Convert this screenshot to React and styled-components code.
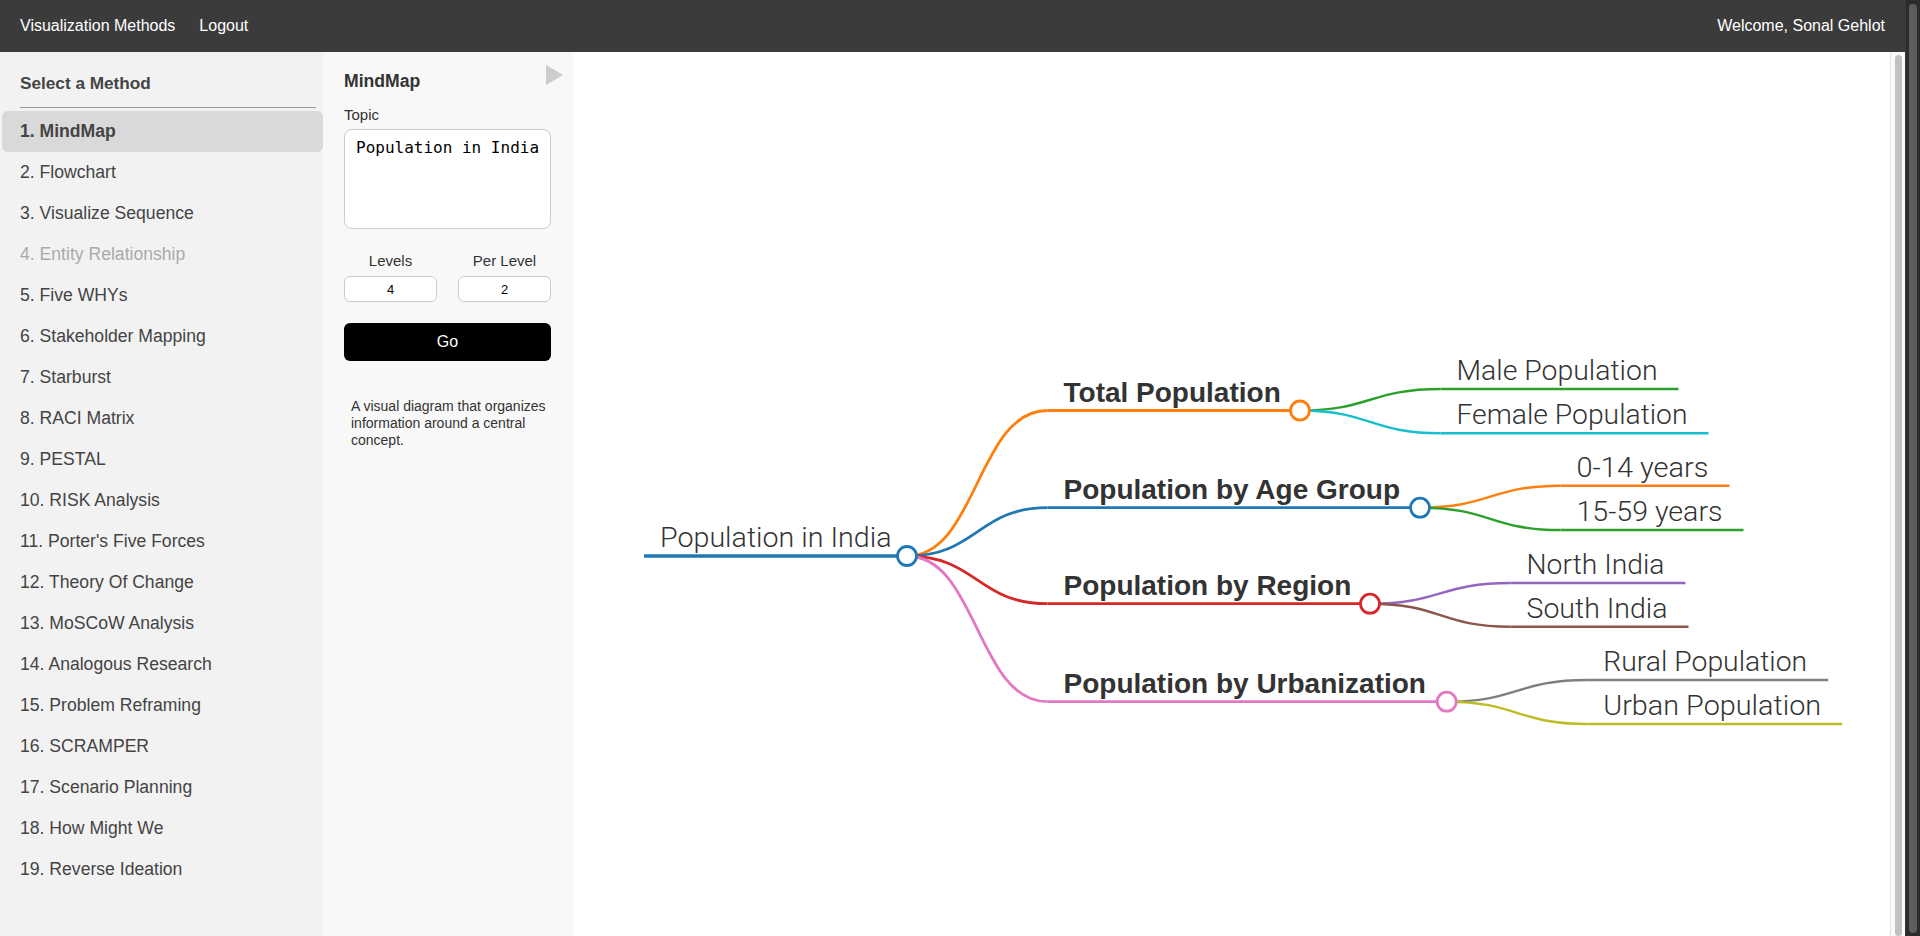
import React from "react";
import styled, { createGlobalStyle } from "styled-components";

const GlobalStyle = createGlobalStyle`
  body {
    margin: 0;
    font-family: "Liberation Sans", Arial, sans-serif;
    color: #333;
    overflow: hidden;
  }
`;

const Page = styled.div`
  height: 100vh;
  display: flex;
`;

const Column = styled.div`
  flex: 1;
  min-width: 0;
  display: flex;
  flex-direction: column;
`;

// stand-ins for the browser scrollbars seen in the screenshot
const Rail = styled.div`
  width: 15px;
  flex-shrink: 0;
  box-sizing: border-box;
  display: flex;
  padding: ${(p) => (p.$dark ? "4px 3px 3px 3px" : "3px 3px 0 4px")};
  background: ${(p) => (p.$dark ? "#2c2c2c" : "#fafafa")};
  border-left: 1px solid ${(p) => (p.$dark ? "#363636" : "#e4e4e4")};
`;

const Thumb = styled.div`
  flex: 1;
  border-radius: 5px;
  background: ${(p) => (p.$dark ? "#5d5d5d" : "#c1c1c1")};
`;

const TopBar = styled.nav`
  height: 52px;
  flex-shrink: 0;
  display: flex;
  align-items: center;
  padding: 0 8px;
  background: #3b3b3b;
  color: #fff;
  font-size: 16px;
`;

const NavLink = styled.a`
  padding: 0 12px;
  color: #fff;
  text-decoration: none;
  cursor: pointer;
  &:last-child {
    margin-left: auto;
  }
`;

const Body = styled.div`
  flex: 1;
  display: flex;
  min-height: 0;
`;

const Sidebar = styled.aside`
  width: 323px;
  flex-shrink: 0;
  background: #f2f2f2;
  overflow: hidden;
`;

const SidebarTitle = styled.h3`
  margin: 0 7px 0 20px;
  padding: 21px 0 14px;
  font-size: 17.2px;
  line-height: 20px;
  font-weight: bold;
  color: #444;
  border-bottom: 1px solid #9a9a9a;
`;

const MethodList = styled.ul`
  list-style: none;
  margin: 3px 0 0 2px;
  padding: 0;
`;

const MethodItem = styled.li`
  height: 41px;
  display: flex;
  align-items: center;
  padding-left: 18px;
  border-radius: 6px;
  font-size: 17.6px;
  cursor: pointer;
  color: ${(p) => (p.$disabled ? "#aaa" : "#444")};
  font-weight: ${(p) => (p.$active ? "bold" : "normal")};
  background: ${(p) => (p.$active ? "#d9d9d9" : "transparent")};
`;

const Panel = styled.section`
  width: 250px;
  flex-shrink: 0;
  box-sizing: border-box;
  padding: 19px 22px 0 21px;
  background: #f8f8f8;
`;

const PanelHeader = styled.div`
  display: flex;
  justify-content: space-between;
  align-items: flex-start;
  margin-right: -12px;
`;

const PanelTitle = styled.div`
  font-size: 17.6px;
  line-height: 20px;
  font-weight: bold;
  color: #333;
`;

const Toggle = styled.div`
  width: 0;
  height: 0;
  margin-top: -6px;
  border-top: 10px solid transparent;
  border-bottom: 10px solid transparent;
  border-left: 17px solid #ccc;
  cursor: pointer;
`;

const FieldLabel = styled.label`
  display: block;
  font-size: 15px;
  line-height: 18px;
  color: #333;
  margin-top: ${(p) => p.$top || 0}px;
  text-align: ${(p) => (p.$center ? "center" : "left")};
`;

const TopicBox = styled.textarea`
  display: block;
  width: 100%;
  height: 100px;
  margin-top: 5px;
  box-sizing: border-box;
  padding: 8px 4px 8px 11px;
  border: 1px solid #ccc;
  border-radius: 8px;
  background: #fff;
  font-family: "DejaVu Sans Mono", "Liberation Mono", monospace;
  font-size: 16px;
  color: #000;
  resize: none;
  outline: none;
  overflow: hidden;
`;

const NumberRow = styled.div`
  display: grid;
  grid-template-columns: 1fr 1fr;
  column-gap: 21px;
  margin-top: 23px;
`;

const NumberInput = styled.input`
  display: block;
  width: 100%;
  height: 26px;
  margin-top: 6px;
  box-sizing: border-box;
  border: 1px solid #ccc;
  border-radius: 6px;
  background: #fff;
  text-align: center;
  font-family: "Liberation Sans", Arial, sans-serif;
  font-size: 13px;
  color: #000;
  outline: none;
`;

const GoButton = styled.button`
  display: block;
  width: 100%;
  height: 38px;
  margin-top: 21px;
  border: none;
  border-radius: 6px;
  background: #000;
  color: #fff;
  font-family: "Liberation Sans", Arial, sans-serif;
  font-size: 16px;
  cursor: pointer;
`;

const Description = styled.p`
  margin: 37px 0 0 7px;
  font-size: 14px;
  line-height: 17px;
  color: #333;
`;

const Main = styled.main`
  flex: 1;
  min-width: 0;
  display: flex;
  background: #fff;
`;

const MapArea = styled.div`
  flex: 1;
  overflow: hidden;
`;

const Canvas = styled.svg`
  display: block;
`;

const Link = styled.path`
  fill: none;
  stroke: ${(p) => p.$color};
  stroke-width: ${(p) => p.$width};
`;

const Stem = styled.line`
  stroke: ${(p) => p.$color};
  stroke-width: ${(p) => p.$width};
`;

const Knob = styled.circle`
  fill: #fff;
  stroke: ${(p) => p.$color};
  stroke-width: 2.8;
`;

const Label = styled.text`
  font-size: 28px;
  fill: #333;
  font-family: ${(p) =>
    p.$bold ? `"Liberation Sans", Arial, sans-serif` : `Roboto, "Liberation Sans", sans-serif`};
  font-weight: ${(p) => (p.$bold ? 700 : 300)};
`;

const METHODS = [
  "MindMap",
  "Flowchart",
  "Visualize Sequence",
  "Entity Relationship",
  "Five WHYs",
  "Stakeholder Mapping",
  "Starburst",
  "RACI Matrix",
  "PESTAL",
  "RISK Analysis",
  "Porter's Five Forces",
  "Theory Of Change",
  "MoSCoW Analysis",
  "Analogous Research",
  "Problem Reframing",
  "SCRAMPER",
  "Scenario Planning",
  "How Might We",
  "Reverse Ideation",
];

// positions measured off the rendered map (page coordinates)
const TREE = {
  text: "Population in India",
  color: "#1f77b4",
  y: 556,
  x0: 644,
  tx: 660,
  w: 231.5,
  cx: 907,
  children: [
    {
      text: "Total Population",
      color: "#ff7f0e",
      y: 410.5,
      w: 217.5,
      cx: 1300,
      children: [
        { text: "Male Population", color: "#2ca02c", y: 389, w: 201 },
        { text: "Female Population", color: "#17becf", y: 433.3, w: 231 },
      ],
    },
    {
      text: "Population by Age Group",
      color: "#1f77b4",
      y: 507.7,
      w: 338,
      cx: 1420,
      children: [
        { text: "0-14 years", color: "#ff7f0e", y: 485.7, w: 132 },
        { text: "15-59 years", color: "#2ca02c", y: 530, w: 146 },
      ],
    },
    {
      text: "Population by Region",
      color: "#d62728",
      y: 603.7,
      w: 288,
      cx: 1370,
      children: [
        { text: "North India", color: "#9467bd", y: 583, w: 138 },
        { text: "South India", color: "#8c564b", y: 626.7, w: 141 },
      ],
    },
    {
      text: "Population by Urbanization",
      color: "#e377c2",
      y: 701.7,
      w: 363,
      cx: 1446.7,
      children: [
        { text: "Rural Population", color: "#7f7f7f", y: 680, w: 204 },
        { text: "Urban Population", color: "#bcbd22", y: 724, w: 218 },
      ],
    },
  ],
};

const WIDTHS = [3.6, 2.8, 2.4];

const flatten = (node, depth = 0, parent = null, out = []) => {
  const x0 = parent ? parent.cx + 140.5 : node.x0;
  const tx = parent ? x0 + 16 : node.tx;
  const end = node.children ? node.cx : tx + node.w + 21;
  const item = { ...node, depth, x0, tx, end, parent };
  out.push(item);
  (node.children || []).forEach((c) => flatten(c, depth + 1, item, out));
  return out;
};

const curve = (x0, y0, x1, y1) => {
  const mx = (x0 + x1) / 2;
  return `M${x0},${y0} C${mx},${y0} ${mx},${y1} ${x1},${y1}`;
};

const MindMap = () => {
  const nodes = flatten(TREE);
  return (
    <Canvas width="1317" height="884" viewBox="573 52 1317 884">
      {nodes
        .filter((n) => n.parent)
        .map((n) => (
          <Link
            key={"l" + n.text}
            d={curve(n.parent.cx, n.parent.y, n.x0, n.y)}
            $color={n.color}
            $width={WIDTHS[n.depth]}
          />
        ))}
      {nodes.map((n) => (
        <Stem
          key={"s" + n.text}
          x1={n.x0}
          y1={n.y}
          x2={n.end}
          y2={n.y}
          $color={n.color}
          $width={WIDTHS[n.depth]}
        />
      ))}
      {nodes
        .filter((n) => n.children)
        .map((n) => (
          <Knob key={"c" + n.text} cx={n.cx} cy={n.y} r="9.5" $color={n.color} />
        ))}
      {nodes.map((n) =>
        n.depth === 1 ? (
          <Label key={"t" + n.text} x={n.tx} y={n.y - 9} $bold>
            {n.text}
          </Label>
        ) : (
          <Label
            key={"t" + n.text}
            x={n.tx}
            y={n.y - 9}
            textLength={n.w}
            lengthAdjust="spacingAndGlyphs"
          >
            {n.text}
          </Label>
        )
      )}
    </Canvas>
  );
};

export default function App() {
  return (
    <Page>
      <GlobalStyle />
      <Column>
        <TopBar>
          <NavLink>Visualization Methods</NavLink>
          <NavLink>Logout</NavLink>
          <NavLink>Welcome, Sonal Gehlot</NavLink>
        </TopBar>
        <Body>
          <Sidebar>
            <SidebarTitle>Select a Method</SidebarTitle>
            <MethodList>
              {METHODS.map((m, i) => (
                <MethodItem key={m} $active={i === 0} $disabled={i === 3}>
                  {i + 1}. {m}
                </MethodItem>
              ))}
            </MethodList>
          </Sidebar>
          <Panel>
            <PanelHeader>
              <PanelTitle>MindMap</PanelTitle>
              <Toggle />
            </PanelHeader>
            <FieldLabel $top={15}>Topic</FieldLabel>
            <TopicBox defaultValue="Population in India" />
            <NumberRow>
              <div>
                <FieldLabel $center>Levels</FieldLabel>
                <NumberInput defaultValue="4" />
              </div>
              <div>
                <FieldLabel $center>Per Level</FieldLabel>
                <NumberInput defaultValue="2" />
              </div>
            </NumberRow>
            <GoButton>Go</GoButton>
            <Description>
              A visual diagram that organizes information around a central concept.
            </Description>
          </Panel>
          <Main>
            <MapArea>
              <MindMap />
            </MapArea>
            <Rail>
              <Thumb />
            </Rail>
          </Main>
        </Body>
      </Column>
      <Rail $dark>
        <Thumb $dark />
      </Rail>
    </Page>
  );
}
